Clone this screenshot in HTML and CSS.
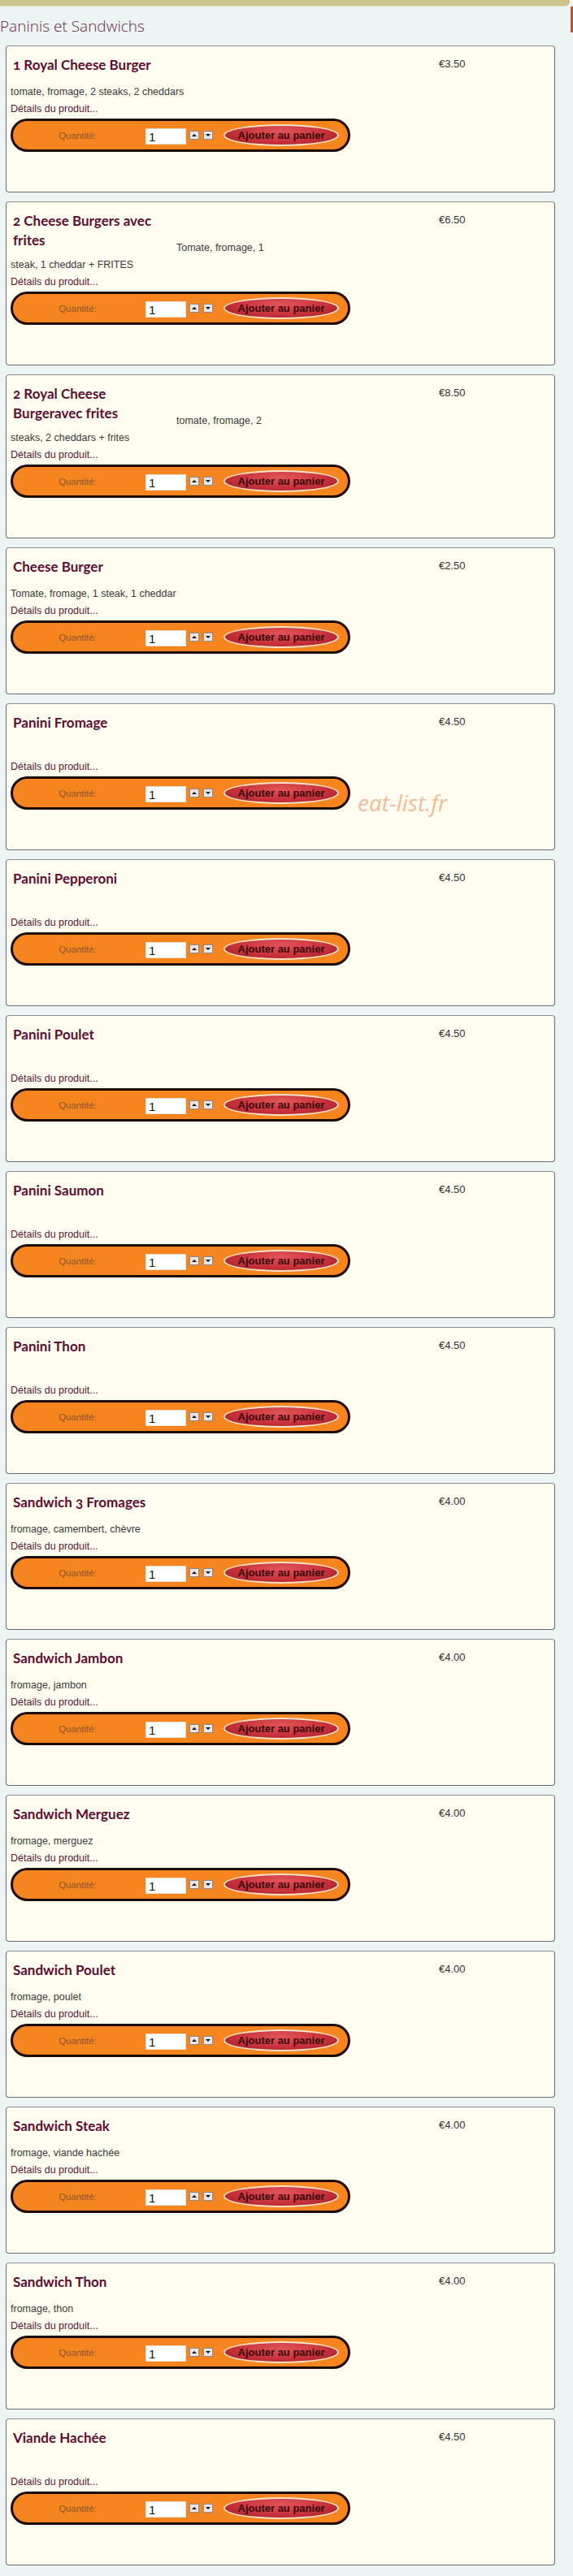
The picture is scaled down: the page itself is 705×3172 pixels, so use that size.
FILE: index.html
```html
<!DOCTYPE html>
<html lang="fr">
<head>
<meta charset="utf-8">
<title>Paninis et Sandwichs</title>
<link rel="stylesheet" href="styles.css">
</head>
<body>
<div class="topbar"></div>
<span class="edge-tab"></span>
<h1 class="page-title">Paninis et Sandwichs</h1>

<div class="menu">

  <div class="card">
    <h2 class="name">1 Royal Cheese Burger</h2>
    <div class="price">€3.50</div>
    <p class="desc">tomate, fromage, 2 steaks, 2 cheddars</p>
    <p class="details">Détails du produit...</p>
    <form class="order">
      <span class="qty-label">Quantité:</span>
      <input class="qty-input" type="text" value="1">
      <span class="spin up"></span><span class="spin down"></span>
      <button class="add" type="button">Ajouter au panier</button>
    </form>
  </div>

  <div class="card">
    <h2 class="name">2 Cheese Burgers avec frites</h2>
    <div class="price">€6.50</div>
    <p class="desc">Tomate, fromage, 1 steak, 1 cheddar + FRITES</p>
    <p class="details">Détails du produit...</p>
    <form class="order">
      <span class="qty-label">Quantité:</span>
      <input class="qty-input" type="text" value="1">
      <span class="spin up"></span><span class="spin down"></span>
      <button class="add" type="button">Ajouter au panier</button>
    </form>
  </div>

  <div class="card">
    <h2 class="name">2 Royal Cheese Burgeravec frites</h2>
    <div class="price">€8.50</div>
    <p class="desc">tomate, fromage, 2 steaks, 2 cheddars + frites</p>
    <p class="details">Détails du produit...</p>
    <form class="order">
      <span class="qty-label">Quantité:</span>
      <input class="qty-input" type="text" value="1">
      <span class="spin up"></span><span class="spin down"></span>
      <button class="add" type="button">Ajouter au panier</button>
    </form>
  </div>

  <div class="card">
    <h2 class="name">Cheese Burger</h2>
    <div class="price">€2.50</div>
    <p class="desc">Tomate, fromage, 1 steak, 1 cheddar</p>
    <p class="details">Détails du produit...</p>
    <form class="order">
      <span class="qty-label">Quantité:</span>
      <input class="qty-input" type="text" value="1">
      <span class="spin up"></span><span class="spin down"></span>
      <button class="add" type="button">Ajouter au panier</button>
    </form>
  </div>

  <div class="card">
    <h2 class="name">Panini Fromage</h2>
    <div class="price">€4.50</div>
    <p class="desc">&nbsp;</p>
    <p class="details">Détails du produit...</p>
    <form class="order">
      <span class="qty-label">Quantité:</span>
      <input class="qty-input" type="text" value="1">
      <span class="spin up"></span><span class="spin down"></span>
      <button class="add" type="button">Ajouter au panier</button>
    </form>
    <span class="watermark">eat-list.fr</span>
  </div>

  <div class="card">
    <h2 class="name">Panini Pepperoni</h2>
    <div class="price">€4.50</div>
    <p class="desc">&nbsp;</p>
    <p class="details">Détails du produit...</p>
    <form class="order">
      <span class="qty-label">Quantité:</span>
      <input class="qty-input" type="text" value="1">
      <span class="spin up"></span><span class="spin down"></span>
      <button class="add" type="button">Ajouter au panier</button>
    </form>
  </div>

  <div class="card">
    <h2 class="name">Panini Poulet</h2>
    <div class="price">€4.50</div>
    <p class="desc">&nbsp;</p>
    <p class="details">Détails du produit...</p>
    <form class="order">
      <span class="qty-label">Quantité:</span>
      <input class="qty-input" type="text" value="1">
      <span class="spin up"></span><span class="spin down"></span>
      <button class="add" type="button">Ajouter au panier</button>
    </form>
  </div>

  <div class="card">
    <h2 class="name">Panini Saumon</h2>
    <div class="price">€4.50</div>
    <p class="desc">&nbsp;</p>
    <p class="details">Détails du produit...</p>
    <form class="order">
      <span class="qty-label">Quantité:</span>
      <input class="qty-input" type="text" value="1">
      <span class="spin up"></span><span class="spin down"></span>
      <button class="add" type="button">Ajouter au panier</button>
    </form>
  </div>

  <div class="card">
    <h2 class="name">Panini Thon</h2>
    <div class="price">€4.50</div>
    <p class="desc">&nbsp;</p>
    <p class="details">Détails du produit...</p>
    <form class="order">
      <span class="qty-label">Quantité:</span>
      <input class="qty-input" type="text" value="1">
      <span class="spin up"></span><span class="spin down"></span>
      <button class="add" type="button">Ajouter au panier</button>
    </form>
  </div>

  <div class="card">
    <h2 class="name">Sandwich 3 Fromages</h2>
    <div class="price">€4.00</div>
    <p class="desc">fromage, camembert, chèvre</p>
    <p class="details">Détails du produit...</p>
    <form class="order">
      <span class="qty-label">Quantité:</span>
      <input class="qty-input" type="text" value="1">
      <span class="spin up"></span><span class="spin down"></span>
      <button class="add" type="button">Ajouter au panier</button>
    </form>
  </div>

  <div class="card">
    <h2 class="name">Sandwich Jambon</h2>
    <div class="price">€4.00</div>
    <p class="desc">fromage, jambon</p>
    <p class="details">Détails du produit...</p>
    <form class="order">
      <span class="qty-label">Quantité:</span>
      <input class="qty-input" type="text" value="1">
      <span class="spin up"></span><span class="spin down"></span>
      <button class="add" type="button">Ajouter au panier</button>
    </form>
  </div>

  <div class="card">
    <h2 class="name">Sandwich Merguez</h2>
    <div class="price">€4.00</div>
    <p class="desc">fromage, merguez</p>
    <p class="details">Détails du produit...</p>
    <form class="order">
      <span class="qty-label">Quantité:</span>
      <input class="qty-input" type="text" value="1">
      <span class="spin up"></span><span class="spin down"></span>
      <button class="add" type="button">Ajouter au panier</button>
    </form>
  </div>

  <div class="card">
    <h2 class="name">Sandwich Poulet</h2>
    <div class="price">€4.00</div>
    <p class="desc">fromage, poulet</p>
    <p class="details">Détails du produit...</p>
    <form class="order">
      <span class="qty-label">Quantité:</span>
      <input class="qty-input" type="text" value="1">
      <span class="spin up"></span><span class="spin down"></span>
      <button class="add" type="button">Ajouter au panier</button>
    </form>
  </div>

  <div class="card">
    <h2 class="name">Sandwich Steak</h2>
    <div class="price">€4.00</div>
    <p class="desc">fromage, viande hachée</p>
    <p class="details">Détails du produit...</p>
    <form class="order">
      <span class="qty-label">Quantité:</span>
      <input class="qty-input" type="text" value="1">
      <span class="spin up"></span><span class="spin down"></span>
      <button class="add" type="button">Ajouter au panier</button>
    </form>
  </div>

  <div class="card">
    <h2 class="name">Sandwich Thon</h2>
    <div class="price">€4.00</div>
    <p class="desc">fromage, thon</p>
    <p class="details">Détails du produit...</p>
    <form class="order">
      <span class="qty-label">Quantité:</span>
      <input class="qty-input" type="text" value="1">
      <span class="spin up"></span><span class="spin down"></span>
      <button class="add" type="button">Ajouter au panier</button>
    </form>
  </div>

  <div class="card">
    <h2 class="name">Viande Hachée</h2>
    <div class="price">€4.50</div>
    <p class="desc">&nbsp;</p>
    <p class="details">Détails du produit...</p>
    <form class="order">
      <span class="qty-label">Quantité:</span>
      <input class="qty-input" type="text" value="1">
      <span class="spin up"></span><span class="spin down"></span>
      <button class="add" type="button">Ajouter au panier</button>
    </form>
  </div>

</div>
</body>
</html>
```

FILE: styles.css
```css
* {
  box-sizing: border-box;
}

body {
  margin: 0;
  position: relative;
  background: #edf4f4;
  font-family: "Liberation Sans Narrow", "Arial Narrow", "Liberation Sans", Arial, sans-serif;
}

/* header strip */
.topbar {
  height: 8px;
  margin-right: 4px;
  background: #cdc38f;
  border-bottom: 1px solid #e2dcb6;
  border-radius: 0 0 6px 0;
}

/* tab peeking in from the right edge */
.edge-tab {
  position: absolute;
  right: 0;
  top: 8px;
  width: 3px;
  height: 32px;
  background: #b9532c;
}

.page-title {
  margin: 12px 0 12px 0;
  font: 300 19px/24px "Open Sans", Lato, sans-serif;
  color: #6b1d44;
}

.menu {
  margin: 0 22px 0 7px;
}

/* product card */
.card {
  position: relative;
  padding: 0 5px;
  margin-bottom: 11px;
  background: #fffdef;
  border: 1px solid #6e6e6e;
  border-top-color: #8e8e8e;
  border-radius: 4px;
}

.name {
  float: left;
  width: 200px;
  margin: 11px 1px 0 3px;
  font: 700 17px/24px Lato, "Open Sans", sans-serif;
  font-variant-numeric: oldstyle-nums;
  color: #5e0c31;
}

.price {
  float: right;
  width: 137px;
  margin-top: 10px;
  font-size: 13px;
  line-height: 24px;
  color: #333;
}

.desc {
  width: 320px;
  margin: 46px 0 0 0;
  font-size: 12.5px;
  line-height: 21px;
  color: #3a3a3a;
}

.details {
  margin: 0;
  font-size: 12.5px;
  line-height: 21px;
  color: #5b1436;
}

/* quantity + add-to-cart pill */
.order {
  clear: both;
  display: flex;
  align-items: center;
  width: 418px;
  height: 41px;
  margin: 1px 0 49px 0;
  background: #f6841f;
  border: 3px solid #1c0b02;
  border-radius: 21px;
}

.qty-label {
  width: 159px;
  margin-right: 4px;
  text-align: center;
  font-size: 11.5px;
  color: #8b5630;
}

.qty-input {
  width: 50px;
  height: 20px;
  margin: 3px 0 0 0;
  padding: 0 3px;
  border: 1px solid #eadfcf;
  background: #fff;
  font-family: "Liberation Sans", Arial, sans-serif;
  font-size: 15px;
  color: #111;
}

.spin {
  position: relative;
  width: 12px;
  height: 11px;
  margin-left: 4px;
  background: #e6e6e6;
  border: 1px solid #8a8a8a;
}

.spin + .spin {
  margin-left: 5px;
}

.spin::before {
  content: "";
  position: absolute;
  left: 2px;
  top: 3px;
  border-left: 3px solid transparent;
  border-right: 3px solid transparent;
}

.spin.up::before {
  border-bottom: 3px solid #111;
}

.spin.down::before {
  border-top: 3px solid #111;
}

.add {
  width: 142px;
  height: 27px;
  margin-left: 13px;
  padding: 0;
  border: 2px solid #f4e2c6;
  border-radius: 50%;
  background: radial-gradient(ellipse at 50% 30%, #e0545a 0%, #c8323b 55%, #9c1c25 100%);
  font-family: "Liberation Sans Narrow", "Arial Narrow", "Liberation Sans", Arial, sans-serif;
  font-weight: 700;
  font-size: 13px;
  color: #3b0808;
}

/* site mark over the card */
.watermark {
  position: absolute;
  left: 432px;
  top: 106px;
  font: italic 400 28px/30px "Open Sans", sans-serif;
  color: rgba(238, 150, 100, 0.65);
}
```
